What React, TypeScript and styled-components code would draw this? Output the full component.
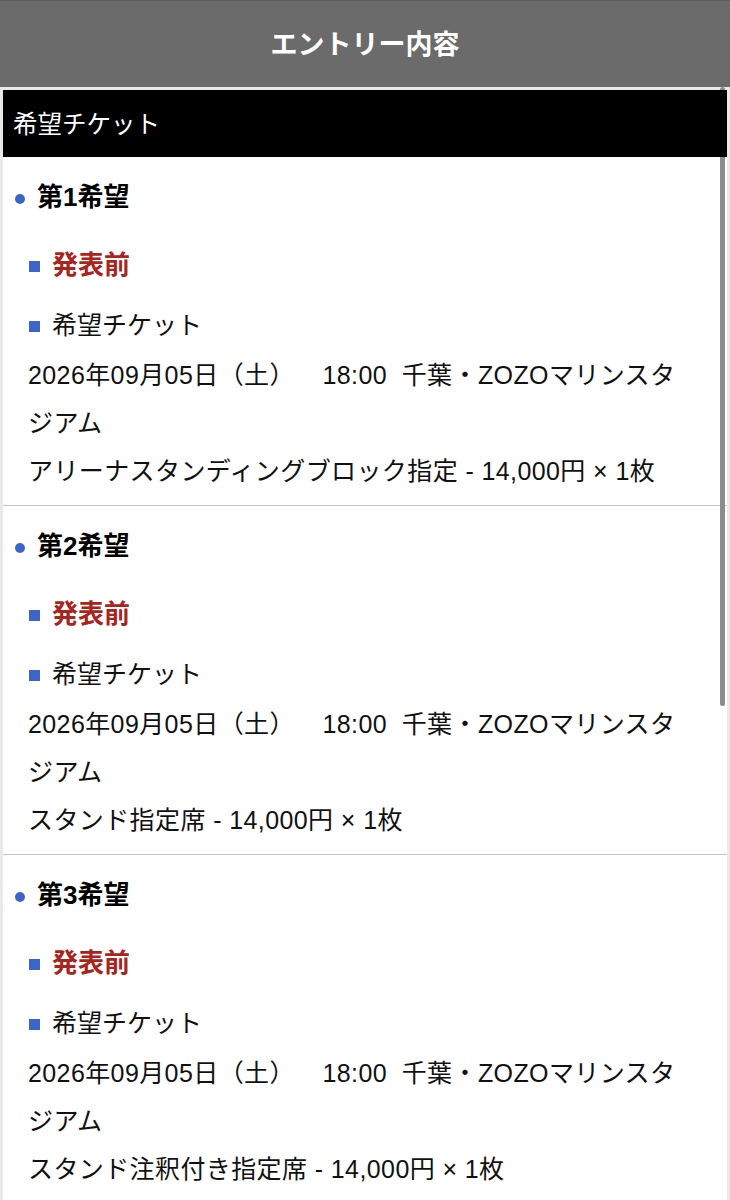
import styled, { createGlobalStyle } from "styled-components";

const GlobalStyle = createGlobalStyle`
  body {
    margin: 0;
    background: #ffffff;
    font-family: "Liberation Sans", "Noto Sans CJK JP", sans-serif;
    color: #111111;
  }
`;

const Page = styled.div`
  position: relative;
  width: 730px;
  height: 1200px;
  overflow: hidden;
`;

const Header = styled.header`
  height: 87px;
  padding-bottom: 3px;
  background-color: #6b6b6b;
  border-top: 1px solid #5e5e5e;
  box-sizing: border-box;
  display: flex;
  justify-content: center;
  align-items: center;
  color: #ffffff;
  font-size: 27px;
  font-weight: bold;
`;

const Frame = styled.div`
  background-color: #e9e9e9;
  padding: 3px 3px 0;
`;

const Panel = styled.div`
  background-color: #ffffff;
`;

const TitleBar = styled.div`
  position: relative;
  z-index: 1;
  height: 67px;
  box-sizing: border-box;
  padding: 0 0 3px 10px;
  background-color: #000000;
  color: #ffffff;
  font-size: 24.5px;
  display: flex;
  align-items: center;
`;

const Section = styled.section<{ $last?: boolean }>`
  padding: 16px 0 10px 0;
  border-bottom: ${(p) => (p.$last ? "none" : "1px solid #c6c6c6")};
`;

const Heading = styled.div`
  display: flex;
  align-items: center;
  padding-left: 12px;
  font-size: 26px;
  font-weight: bold;
  line-height: 48px;
  color: #000000;
`;

const Dot = styled.span`
  width: 10px;
  height: 10px;
  border-radius: 50%;
  background-color: #3c65c9;
  margin-right: 12px;
  margin-top: 3px;
`;

const Item = styled.div<{ $status?: boolean }>`
  display: flex;
  align-items: center;
  padding-left: 26px;
  margin-top: ${(p) => (p.$status ? "20px" : "12px")};
  font-size: ${(p) => (p.$status ? "26px" : "25px")};
  line-height: 48px;
  font-weight: ${(p) => (p.$status ? "bold" : "normal")};
  color: ${(p) => (p.$status ? "#a8241c" : "#111111")};
`;

const Square = styled.span`
  width: 11px;
  height: 11px;
  background-color: #3c65c9;
  margin-right: 12px;
  margin-top: 3px;
`;

const Detail = styled.div`
  padding: 0 40px 0 25px;
  margin-top: 2px;
  font-size: 25px;
  line-height: 48px;
  letter-spacing: 0.4px;
`;

const ScrollThumb = styled.div`
  position: absolute;
  top: 87px;
  left: 720px;
  width: 5px;
  height: 619px;
  border-radius: 3px;
  background-color: #8c8c8c;
`;

type Choice = {
  rank: number;
  seat: string;
};

const choices: Choice[] = [
  { rank: 1, seat: "アリーナスタンディングブロック指定 - 14,000円 × 1枚" },
  { rank: 2, seat: "スタンド指定席 - 14,000円 × 1枚" },
  { rank: 3, seat: "スタンド注釈付き指定席 - 14,000円 × 1枚" },
];

const App = () => {
  return (
    <Page>
      <GlobalStyle />
      <Header>エントリー内容</Header>
      <Frame>
        <Panel>
          <TitleBar>希望チケット</TitleBar>
          {choices.map((c, i) => (
            <Section key={c.rank} $last={i === choices.length - 1}>
              <Heading>
                <Dot />
                第{c.rank}希望
              </Heading>
              <Item $status>
                <Square />
                発表前
              </Item>
              <Item>
                <Square />
                希望チケット
              </Item>
              <Detail>
                2026年09月05日（土）　&nbsp;&nbsp;18:00&nbsp;&nbsp;千葉・ZOZOマリンスタジアム
                <br />
                {c.seat}
              </Detail>
            </Section>
          ))}
        </Panel>
      </Frame>
      <ScrollThumb />
    </Page>
  );
};

export default App;
